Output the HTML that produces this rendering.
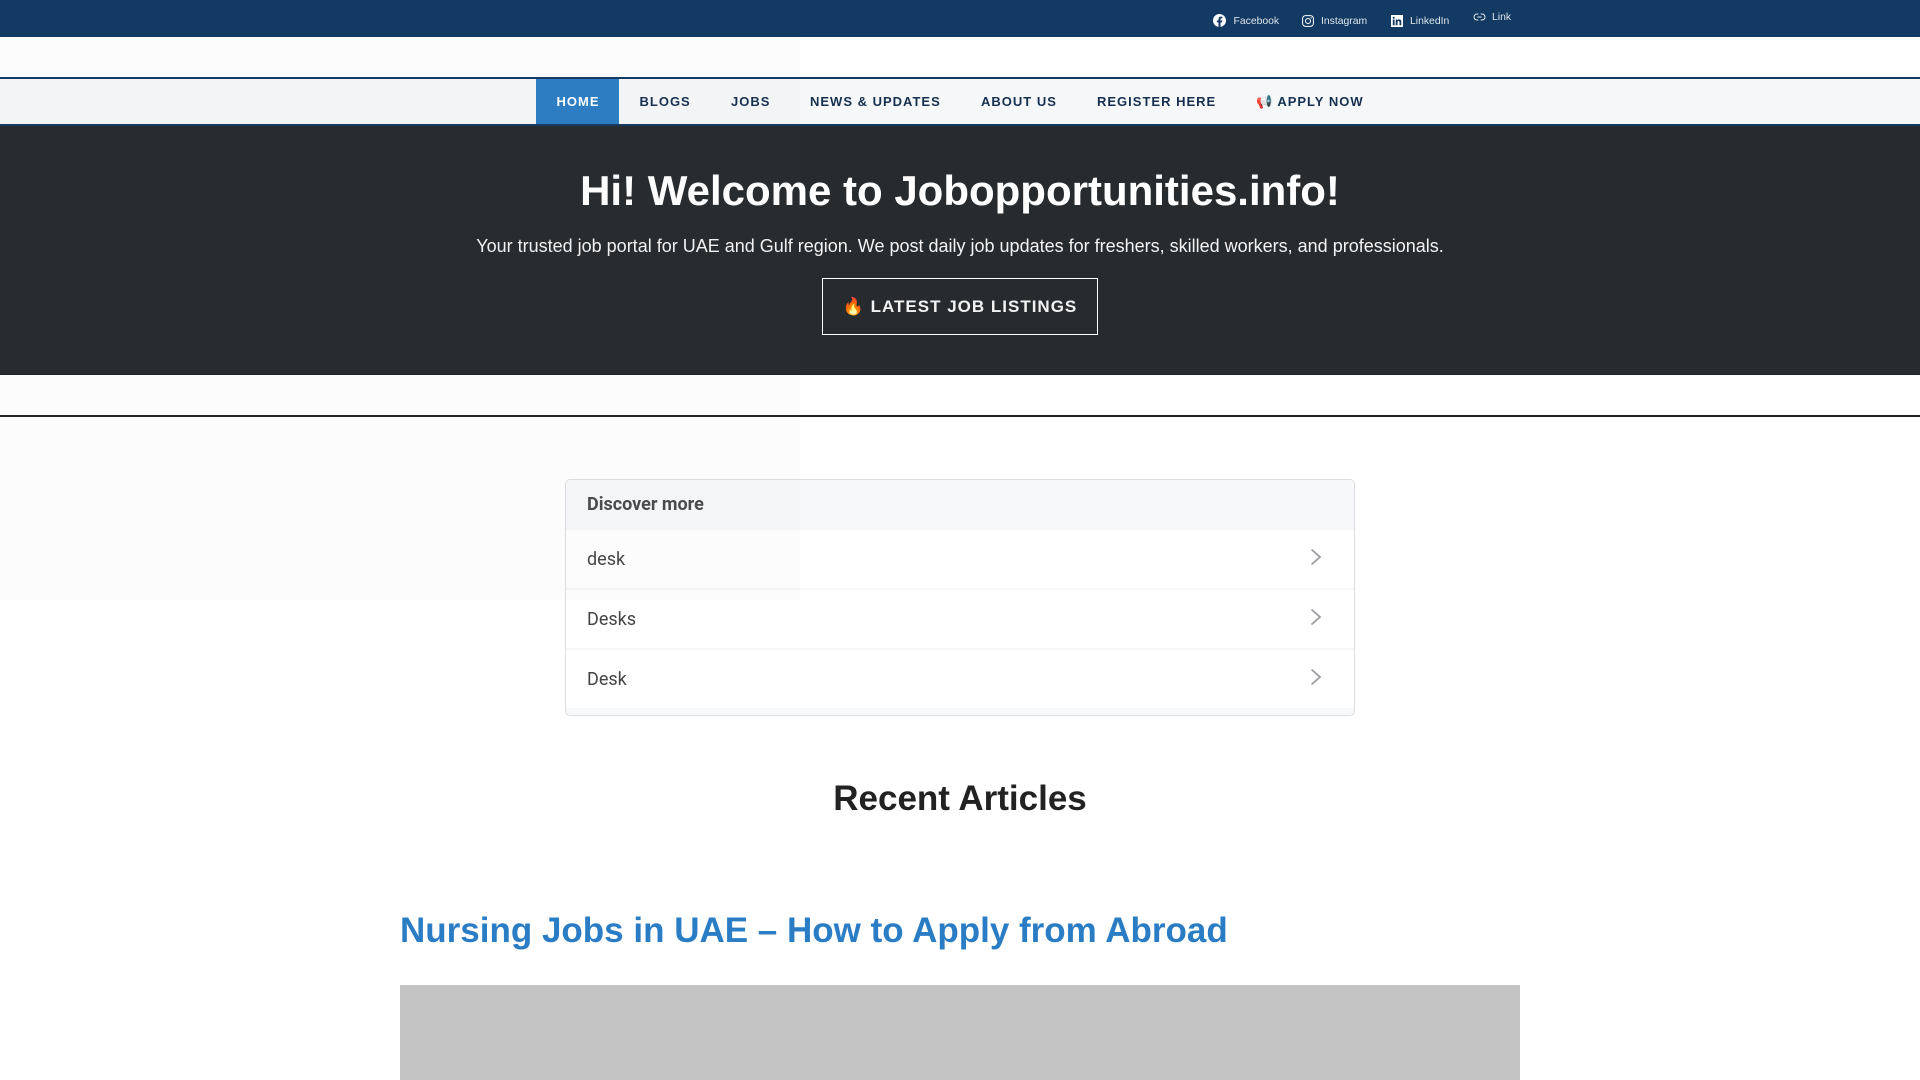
<!DOCTYPE html>
<html lang="en">
<head>
<meta charset="utf-8">
<title>Jobopportunities.info</title>
<style>
html,body{margin:0;padding:0;background:#fff;}
body{width:1920px;height:1080px;overflow:hidden;position:relative;font-family:"Liberation Sans",Arial,sans-serif;}
#top{position:absolute;left:0;top:0;width:1920px;height:37px;background:#133a63;}
#top span{position:absolute;color:#dfe5eb;font-size:10.4px;line-height:12px;white-space:nowrap;}
#top svg{position:absolute;}
#nav{position:absolute;z-index:2;left:0;top:77px;width:1920px;height:45px;border-top:2px solid #133a63;border-bottom:2px solid #133a63;background:#f6f7f9;}
#nav a{position:absolute;top:0;height:45px;line-height:45px;font-size:13px;font-weight:700;letter-spacing:1px;color:#16304f;text-decoration:none;white-space:nowrap;}
#nav .act{left:536px;width:83px;padding-left:1px;box-sizing:border-box;background:#2a7dc4;color:#fff;text-align:center;}
#hero{position:absolute;left:0;top:125px;width:1920px;height:250px;background:#272b2e;color:#fff;text-align:center;border-bottom:1px solid #1e2124;box-sizing:border-box;}
#hero h1{position:absolute;left:0;width:1920px;top:41px;margin:0;font-size:42px;line-height:50px;font-weight:700;}
#hero p{position:absolute;left:0;width:1920px;top:108px;margin:0;font-size:18px;line-height:27px;color:#f3f3f3;}
#btn{position:absolute;left:822px;top:153px;width:276px;height:57px;box-sizing:border-box;border:1px solid #fff;line-height:55px;font-size:17px;font-weight:700;letter-spacing:1px;color:#f2f2f2;text-align:center;}
#rule{position:absolute;left:0;top:415px;width:1920px;height:2px;background:#222;}
#card{position:absolute;left:565px;top:479px;width:790px;height:237px;box-sizing:border-box;border:1px solid #dcdde0;border-radius:5px;overflow:hidden;background:#fff;color:#444;font-family:Roboto,"Liberation Sans",Arial,sans-serif;}
#card .hd{position:absolute;left:0;top:0;width:100%;height:50px;background:#f7f8fa;font-weight:700;font-size:18px;line-height:49px;text-indent:21px;color:#4a4a4a;}
#card .row{position:absolute;left:0;width:100%;height:60px;line-height:60px;font-size:18px;text-indent:21px;border-bottom:2px solid #f7f7f8;box-sizing:border-box;}
#card .ft{position:absolute;left:0;top:228px;width:100%;height:8px;background:#f7f8fa;}
#card svg{position:absolute;left:744px;top:18px;}
#rec{position:absolute;left:0;top:777px;width:1920px;text-align:center;margin:0;font-size:35px;line-height:44px;font-weight:700;color:#222;}
#ttl{position:absolute;left:400px;top:909px;margin:0;font-size:35px;line-height:44px;font-weight:700;color:#2a7dc4;white-space:nowrap;}
#img{position:absolute;left:400px;top:985px;width:1120px;height:95px;background:#c4c4c4;}
#veil{position:absolute;z-index:3;left:0;top:37px;width:800px;height:563px;background:rgba(120,120,120,.025);pointer-events:none;}
</style>
</head>
<body>
<div id="top">
<svg style="left:1213px;top:14px" width="13" height="13" viewBox="0 0 24 24" fill="#fff"><path d="M24 12.073c0-6.627-5.373-12-12-12s-12 5.373-12 12c0 5.99 4.388 10.954 10.125 11.854v-8.385H7.078v-3.47h3.047V9.43c0-3.007 1.792-4.669 4.533-4.669 1.312 0 2.686.235 2.686.235v2.953H15.83c-1.491 0-1.956.925-1.956 1.874v2.25h3.328l-.532 3.47h-2.796v8.385C19.612 23.027 24 18.062 24 12.073z"/></svg>
<span style="left:1233.500px;top:16px">Facebook</span>
<svg style="left:1302px;top:15px" width="12" height="12" viewBox="0 0 24 24" fill="none" stroke="#fff" stroke-width="2"><rect x="1.200" y="1.200" width="21.600" height="21.600" rx="6"/><circle cx="12" cy="12" r="5"/><circle cx="18.200" cy="5.800" r="1.300" fill="#fff" stroke="none"/></svg>
<span style="left:1321px;top:16px">Instagram</span>
<svg style="left:1391px;top:15px" width="12" height="12" viewBox="0 0 24 24"><path fill="#fff" d="M0 0h24v24H0z"/><path fill="#133a63" d="M3.600 9h3.600v11.500H3.600zM5.400 3.400a2.100 2.100 0 1 1 0 4.200 2.100 2.100 0 0 1 0-4.200zM9.400 9h3.400v1.600c.5-.9 1.700-1.900 3.500-1.900 3.700 0 4.300 2.400 4.300 5.500v6.300H17v-5.600c0-1.300 0-3-1.800-3s-2.100 1.400-2.100 2.900v5.700H9.400z"/></svg>
<span style="left:1410px;top:16px">LinkedIn</span>
<svg style="left:1473px;top:12px" width="13" height="10" viewBox="0 0 24 20" fill="none" stroke="#e4e9ee" stroke-width="2" stroke-linecap="round"><path d="M9 4H7a6 6 0 0 0 0 12h2M15 4h2a6 6 0 0 1 0 12h-2M8.500 10h7"/></svg>
<span style="left:1492px;top:12px">Link</span>
</div>
<div id="nav">
<a class="act">HOME</a>
<a style="left:639.500px">BLOGS</a>
<a style="left:731px">JOBS</a>
<a style="left:810px">NEWS &amp; UPDATES</a>
<a style="left:981px">ABOUT US</a>
<a style="left:1097px">REGISTER HERE</a>
<a style="left:1256px">📢 APPLY NOW</a>
</div>
<div id="hero">
<h1>Hi! Welcome to Jobopportunities.info!</h1>
<p>Your trusted job portal for UAE and Gulf region. We post daily job updates for freshers, skilled workers, and professionals.</p>
<div id="btn">🔥 LATEST JOB LISTINGS</div>
</div>
<div id="rule"></div>
<div id="card">
<div class="hd">Discover more</div>
<div class="row" style="top:50px">desk<svg width="12" height="18" viewBox="0 0 12 18" fill="none" stroke="#9a9ca0" stroke-width="1.800"><path d="M1.500 1.500 10 9l-8.500 7.500"/></svg></div>
<div class="row" style="top:110px">Desks<svg width="12" height="18" viewBox="0 0 12 18" fill="none" stroke="#9a9ca0" stroke-width="1.800"><path d="M1.500 1.500 10 9l-8.500 7.500"/></svg></div>
<div class="row" style="top:170px;border-bottom:none">Desk<svg width="12" height="18" viewBox="0 0 12 18" fill="none" stroke="#9a9ca0" stroke-width="1.800"><path d="M1.500 1.500 10 9l-8.500 7.500"/></svg></div>
<div class="ft"></div>
</div>
<h2 id="rec">Recent Articles</h2>
<h2 id="ttl">Nursing Jobs in UAE – How to Apply from Abroad</h2>
<div id="img"></div>
<div id="veil"></div>
</body>
</html>
